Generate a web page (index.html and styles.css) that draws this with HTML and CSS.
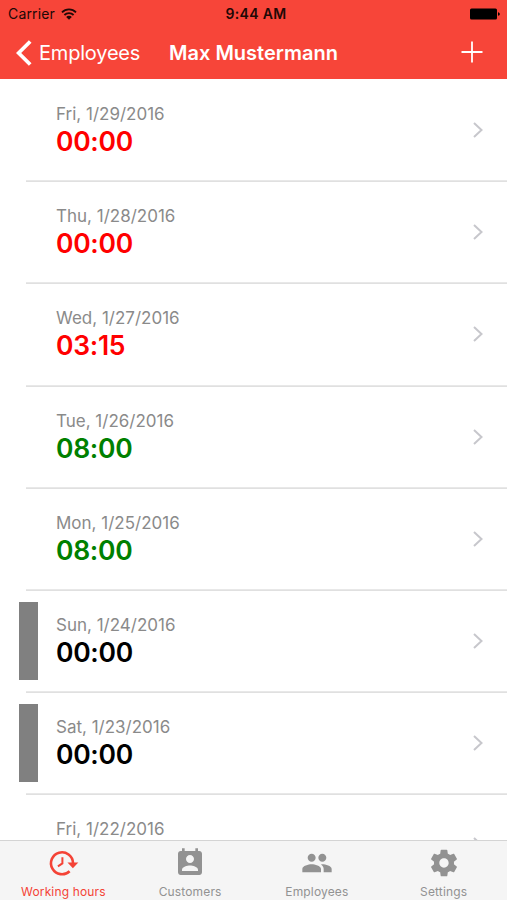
FILE: index.html
```html
<!DOCTYPE html>
<html lang="en">
<head>
  <meta charset="UTF-8" />
  <title>Working hours</title>
  <link rel="stylesheet" href="styles.css">
</head>
<body>
  <header class="header">
    <div class="status-bar">
      <div class="carrier">
        <span>Carrier</span>
        <svg class="wifi" viewBox="0 0 16 12">
          <path d="M1 4.300a10 10 0 0 1 14 0" />
          <path d="M3.400 7a6.600 6.600 0 0 1 9.200 0" />
          <path class="dot" d="M8 11.800 5.200 9a3.800 3.800 0 0 1 5.600 0z" />
        </svg>
      </div>
      <span class="clock">9:44 AM</span>
      <svg class="battery" viewBox="0 0 30 12">
        <rect x="0" y="0.5" width="27" height="11" rx="1.5" />
        <path d="M28 4.2c1.1.2 1.8.9 1.8 1.8s-.7 1.6-1.8 1.8z" />
      </svg>
    </div>
    <nav class="nav-bar">
      <a class="back" href="#">
        <svg viewBox="0 0 16 26"><path d="M14.2 1.5 2.6 13l11.6 11.5" /></svg>
        <span>Employees</span>
      </a>
      <h1>Max Mustermann</h1>
      <a class="add" href="#">
        <svg viewBox="0 0 22 22"><path d="M11 0.5v21M0.5 11h21" /></svg>
      </a>
    </nav>
  </header>

  <main class="days">
    <div class="day">
      <div class="info"><span class="date">Fri, 1/29/2016</span><span class="time missing">00:00</span></div>
      <svg class="chevron" viewBox="0 0 10 16"><path d="M1 1l7.5 7L1 15" /></svg>
    </div>
    <div class="day">
      <div class="info"><span class="date">Thu, 1/28/2016</span><span class="time missing">00:00</span></div>
      <svg class="chevron" viewBox="0 0 10 16"><path d="M1 1l7.5 7L1 15" /></svg>
    </div>
    <div class="day">
      <div class="info"><span class="date">Wed, 1/27/2016</span><span class="time missing">03:15</span></div>
      <svg class="chevron" viewBox="0 0 10 16"><path d="M1 1l7.5 7L1 15" /></svg>
    </div>
    <div class="day">
      <div class="info"><span class="date">Tue, 1/26/2016</span><span class="time done">08:00</span></div>
      <svg class="chevron" viewBox="0 0 10 16"><path d="M1 1l7.5 7L1 15" /></svg>
    </div>
    <div class="day">
      <div class="info"><span class="date">Mon, 1/25/2016</span><span class="time done">08:00</span></div>
      <svg class="chevron" viewBox="0 0 10 16"><path d="M1 1l7.5 7L1 15" /></svg>
    </div>
    <div class="day weekend">
      <div class="info"><span class="date">Sun, 1/24/2016</span><span class="time">00:00</span></div>
      <svg class="chevron" viewBox="0 0 10 16"><path d="M1 1l7.5 7L1 15" /></svg>
    </div>
    <div class="day weekend">
      <div class="info"><span class="date">Sat, 1/23/2016</span><span class="time">00:00</span></div>
      <svg class="chevron" viewBox="0 0 10 16"><path d="M1 1l7.5 7L1 15" /></svg>
    </div>
    <div class="day">
      <div class="info"><span class="date">Fri, 1/22/2016</span></div>
      <svg class="chevron" viewBox="0 0 10 16"><path d="M1 1l7.5 7L1 15" /></svg>
    </div>
  </main>

  <nav class="tab-bar">
    <a class="tab active" href="#">
      <svg viewBox="0 0 32 32">
        <path class="line" d="M22.600 24.200A11 11 0 1 1 26 16" />
        <path d="M20.500 15.400h10.800l-5.400 5.800z" />
        <path class="line thin" d="M15.400 10.200v6.200l-4.500 3" />
      </svg>
      <span>Working hours</span>
    </a>
    <a class="tab" href="#">
      <svg viewBox="0 0 24 24"><path d="M19 3h-1V1h-2v2H8V1H6v2H5c-1.11 0-2 .9-2 2v14c0 1.1.89 2 2 2h14c1.1 0 2-.9 2-2V5c0-1.1-.9-2-2-2zm-7 3c1.66 0 3 1.34 3 3s-1.34 3-3 3-3-1.34-3-3 1.34-3 3-3zm6 12H6v-1c0-2 4-3.1 6-3.1s6 1.1 6 3.1v1z" /></svg>
      <span>Customers</span>
    </a>
    <a class="tab" href="#">
      <svg viewBox="0 0 24 24"><path d="M16 11c1.66 0 2.99-1.34 2.99-3S17.66 5 16 5s-3 1.34-3 3 1.34 3 3 3zm-8 0c1.66 0 2.99-1.34 2.99-3S9.66 5 8 5 5 6.34 5 8s1.34 3 3 3zm0 2c-2.33 0-7 1.17-7 3.5V19h14v-2.5c0-2.33-4.67-3.5-7-3.5zm8 0c-.29 0-.62.02-.97.05 1.16.84 1.97 1.97 1.97 3.45V19h6v-2.5c0-2.33-4.67-3.5-7-3.5z" /></svg>
      <span>Employees</span>
    </a>
    <a class="tab" href="#">
      <svg viewBox="0 0 24 24"><path d="M19.43 12.98c.04-.32.07-.64.07-.98s-.03-.66-.07-.98l2.11-1.65c.19-.15.24-.42.12-.64l-2-3.46c-.12-.22-.39-.3-.61-.22l-2.49 1c-.52-.4-1.08-.73-1.69-.98l-.38-2.65C14.46 2.18 14.25 2 14 2h-4c-.25 0-.46.18-.49.42l-.38 2.65c-.61.25-1.17.59-1.69.98l-2.49-1c-.23-.09-.49 0-.61.22l-2 3.46c-.13.22-.07.49.12.64l2.11 1.65c-.04.32-.07.65-.07.98s.03.66.07.98l-2.11 1.65c-.19.15-.24.42-.12.64l2 3.46c.12.22.39.3.61.22l2.49-1c.52.4 1.08.73 1.69.98l.38 2.65c.03.24.24.42.49.42h4c.25 0 .46-.18.49-.42l.38-2.65c.61-.25 1.17-.59 1.69-.98l2.49 1c.23.09.49 0 .61-.22l2-3.46c.12-.22.07-.49-.12-.64l-2.11-1.65zM12 15.5c-1.93 0-3.5-1.57-3.5-3.5s1.57-3.5 3.5-3.5 3.5 1.57 3.5 3.5-1.57 3.5-3.5 3.5z" /></svg>
      <span>Settings</span>
    </a>
  </nav>
</body>
</html>
```
FILE: styles.css
```css
* { box-sizing: border-box; }
body { margin: 0; height: 900px; display: flex; flex-direction: column; overflow: hidden; background: #fff; font-family: Inter, "Liberation Sans", sans-serif; }
a { color: inherit; text-decoration: none; }
svg { display: block; flex: none; }

.header { height: 79px; flex: none; background: #f74539; color: #fff; }
.status-bar { height: 27px; padding: 0 7px 0 12px; display: grid; grid-template-columns: 1fr auto 1fr; align-items: center; color: #200806; font-size: 14px; }
.carrier { margin-left: -4px; display: flex; align-items: center; gap: 6px; letter-spacing: 0.15px; }
.wifi { width: 16px; height: 12px; fill: none; stroke: #200806; stroke-width: 1.8; }
.wifi .dot { fill: #200806; stroke: none; }
.clock { font-weight: 600; letter-spacing: 0.3px; }
.battery { width: 30px; height: 12px; justify-self: end; fill: #000; }

.nav-bar { height: 52px; padding: 0 16px 1px; display: grid; grid-template-columns: 1fr auto 1fr; align-items: center; }
.back { display: flex; align-items: center; gap: 7px; font-size: 20px; letter-spacing: -0.2px; }
.back svg { width: 16px; height: 26px; fill: none; stroke: #fff; stroke-width: 3.8; }
.nav-bar h1 { margin: 0; font-size: 20px; font-weight: 600; }
.add { justify-self: end; margin-right: 8px; }
.add svg { width: 22px; height: 22px; margin-top: -1px; stroke: #fff; stroke-width: 1.8; }

.days { flex: 1; min-height: 0; overflow: hidden; }
.day { height: 102.2px; margin-left: 26px; padding: 25px 24px 0 30px; display: flex; justify-content: space-between; box-shadow: 0 1px 0 #e0e0e0, inset 0 -1px 0 #e8e8e8; }
.info { display: flex; flex-direction: column; }
.date { font-size: 17px; line-height: 20px; color: #8a8a8a; }
.time { font-size: 26.5px; line-height: 34px; font-weight: 600; letter-spacing: -0.3px; color: #000; }
.missing { color: #ff0000; }
.done { color: #008000; }
.chevron { width: 10px; height: 16px; margin-top: 18px; fill: none; stroke: #c7c7cc; stroke-width: 2; }
/* grey marker sits to the left of the row's divider */
.weekend { position: relative; }
.weekend::before { content: ""; position: absolute; left: -7px; top: 12px; width: 19px; height: 78px; background: #808080; }

.tab-bar { height: 60px; flex: none; display: flex; background: #f5f5f5; border-top: 1px solid #d4d4d4; color: #929292; font-size: 12px; letter-spacing: 0.15px; }
.tab { flex: 1; padding-top: 6px; display: flex; flex-direction: column; align-items: center; gap: 5px; }
.tab svg { width: 32px; height: 32px; fill: currentColor; }
.tab .line { fill: none; stroke: currentColor; stroke-width: 2.6; }
.tab .thin { stroke-width: 2; }
.active { color: #f44336; }
```
